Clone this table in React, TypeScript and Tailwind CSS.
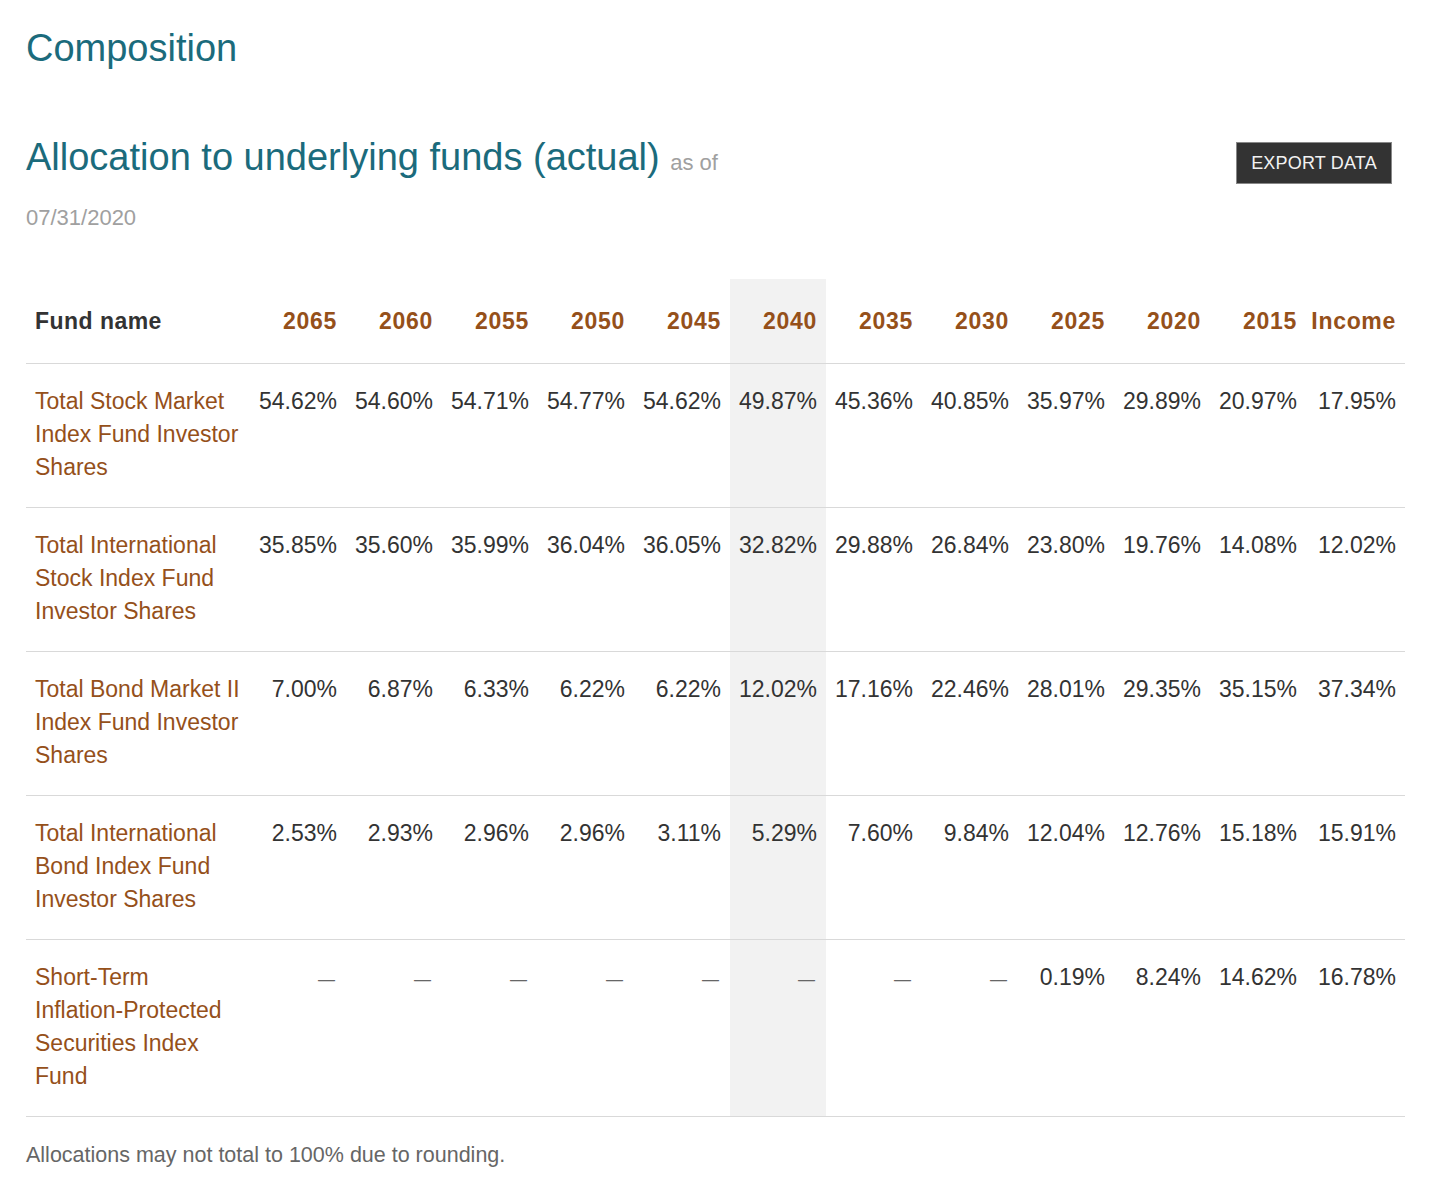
const years = ["2065", "2060", "2055", "2050", "2045", "2040", "2035", "2030", "2025", "2020", "2015", "Income"];

const rows: { name: string[]; values: (string | null)[] }[] = [
  {
    name: ["Total", "Stock", "Market", "Index", "Fund", "Investor", "Shares"],
    values: ["54.62%", "54.60%", "54.71%", "54.77%", "54.62%", "49.87%", "45.36%", "40.85%", "35.97%", "29.89%", "20.97%", "17.95%"],
  },
  {
    name: ["Total", "International", "Stock", "Index", "Fund", "Investor", "Shares"],
    values: ["35.85%", "35.60%", "35.99%", "36.04%", "36.05%", "32.82%", "29.88%", "26.84%", "23.80%", "19.76%", "14.08%", "12.02%"],
  },
  {
    name: ["Total", "Bond", "Market", "II", "Index", "Fund", "Investor", "Shares"],
    values: ["7.00%", "6.87%", "6.33%", "6.22%", "6.22%", "12.02%", "17.16%", "22.46%", "28.01%", "29.35%", "35.15%", "37.34%"],
  },
  {
    name: ["Total", "International", "Bond", "Index", "Fund", "Investor", "Shares"],
    values: ["2.53%", "2.93%", "2.96%", "2.96%", "3.11%", "5.29%", "7.60%", "9.84%", "12.04%", "12.76%", "15.18%", "15.91%"],
  },
  {
    name: ["Short-Term", "Inflation-Protected", "Securities", "Index", "Fund"],
    values: [null, null, null, null, null, null, null, null, "0.19%", "8.24%", "14.62%", "16.78%"],
  },
];

const HIGHLIGHT = 5;

export default function App() {
  return (
    <div className="min-h-screen bg-white pl-[26px] pr-[25px] pt-[26px] font-['Liberation_Sans',Arial,sans-serif] text-[#333]">
      <h1 className="text-[38px] leading-[44px] text-[#1b6b7c]">Composition</h1>

      {/* Allocation heading + export */}
      <div className="mt-[65px] flex items-start justify-between">
        <div>
          <h2 className="text-[38px] leading-[44px] text-[#1b6b7c]">
            Allocation to underlying funds (actual){" "}
            <span className="text-[22px] text-[#a0a0a0]">as of</span>
          </h2>
          <p className="mt-[18px] text-[22px] leading-[30px] text-[#a0a0a0]">07/31/2020</p>
        </div>
        <button className="mr-[13px] mt-[7px] h-[42px] w-[156px] border border-[#888] bg-[#333] text-[18px] tracking-[0.01em] text-[#f2f2f2]">
          EXPORT DATA
        </button>
      </div>

      {/* Table */}
      <table className="mt-[46px] w-[1379px] table-fixed border-collapse">
        <colgroup>
          <col className="w-[224px]" />
          {years.map((y) => (
            <col key={y} className={y === "Income" ? "w-[99px]" : "w-[96px]"} />
          ))}
        </colgroup>
        <thead>
          <tr>
            <th className="h-[84px] border-b border-[#d9d9d9] pl-[9px] text-left align-middle text-[23px] font-bold tracking-[0.02em] text-[#333]">
              Fund name
            </th>
            {years.map((y, i) => (
              <th
                key={y}
                className={
                  "h-[84px] border-b border-[#d9d9d9] pr-[9px] text-right align-middle text-[23px] font-bold tracking-[0.03em] text-[#95501a] " +
                  (i === HIGHLIGHT ? "bg-[#f2f2f2]" : "")
                }
              >
                {y}
              </th>
            ))}
          </tr>
        </thead>
        <tbody>
          {rows.map((r) => (
            <tr key={r.name.join(" ")}>
              <td className="border-b border-[#d9d9d9] pb-[23px] pl-[9px] pr-[1px] pt-[21px] text-left align-top text-[23px] leading-[33px] text-[#95501a]">
                {r.name.map((w, i) => (
                  <span key={i}>
                    <span className="whitespace-nowrap">{w}</span>
                    {i < r.name.length - 1 ? " " : ""}
                  </span>
                ))}
              </td>
              {r.values.map((v, i) => (
                <td
                  key={i}
                  className={
                    "border-b border-[#d9d9d9] pb-[23px] pr-[9px] pt-[21px] text-right align-top text-[23px] leading-[33px] text-[#333] " +
                    (i === HIGHLIGHT ? "bg-[#f2f2f2]" : "")
                  }
                >
                  {v ?? <span className="pr-[2px] text-[17px] text-[#666]">—</span>}
                </td>
              ))}
            </tr>
          ))}
        </tbody>
      </table>

      <p className="mt-[24px] text-[21.5px] leading-[28px] text-[#666]">
        Allocations may not total to 100% due to rounding.
      </p>
    </div>
  );
}
